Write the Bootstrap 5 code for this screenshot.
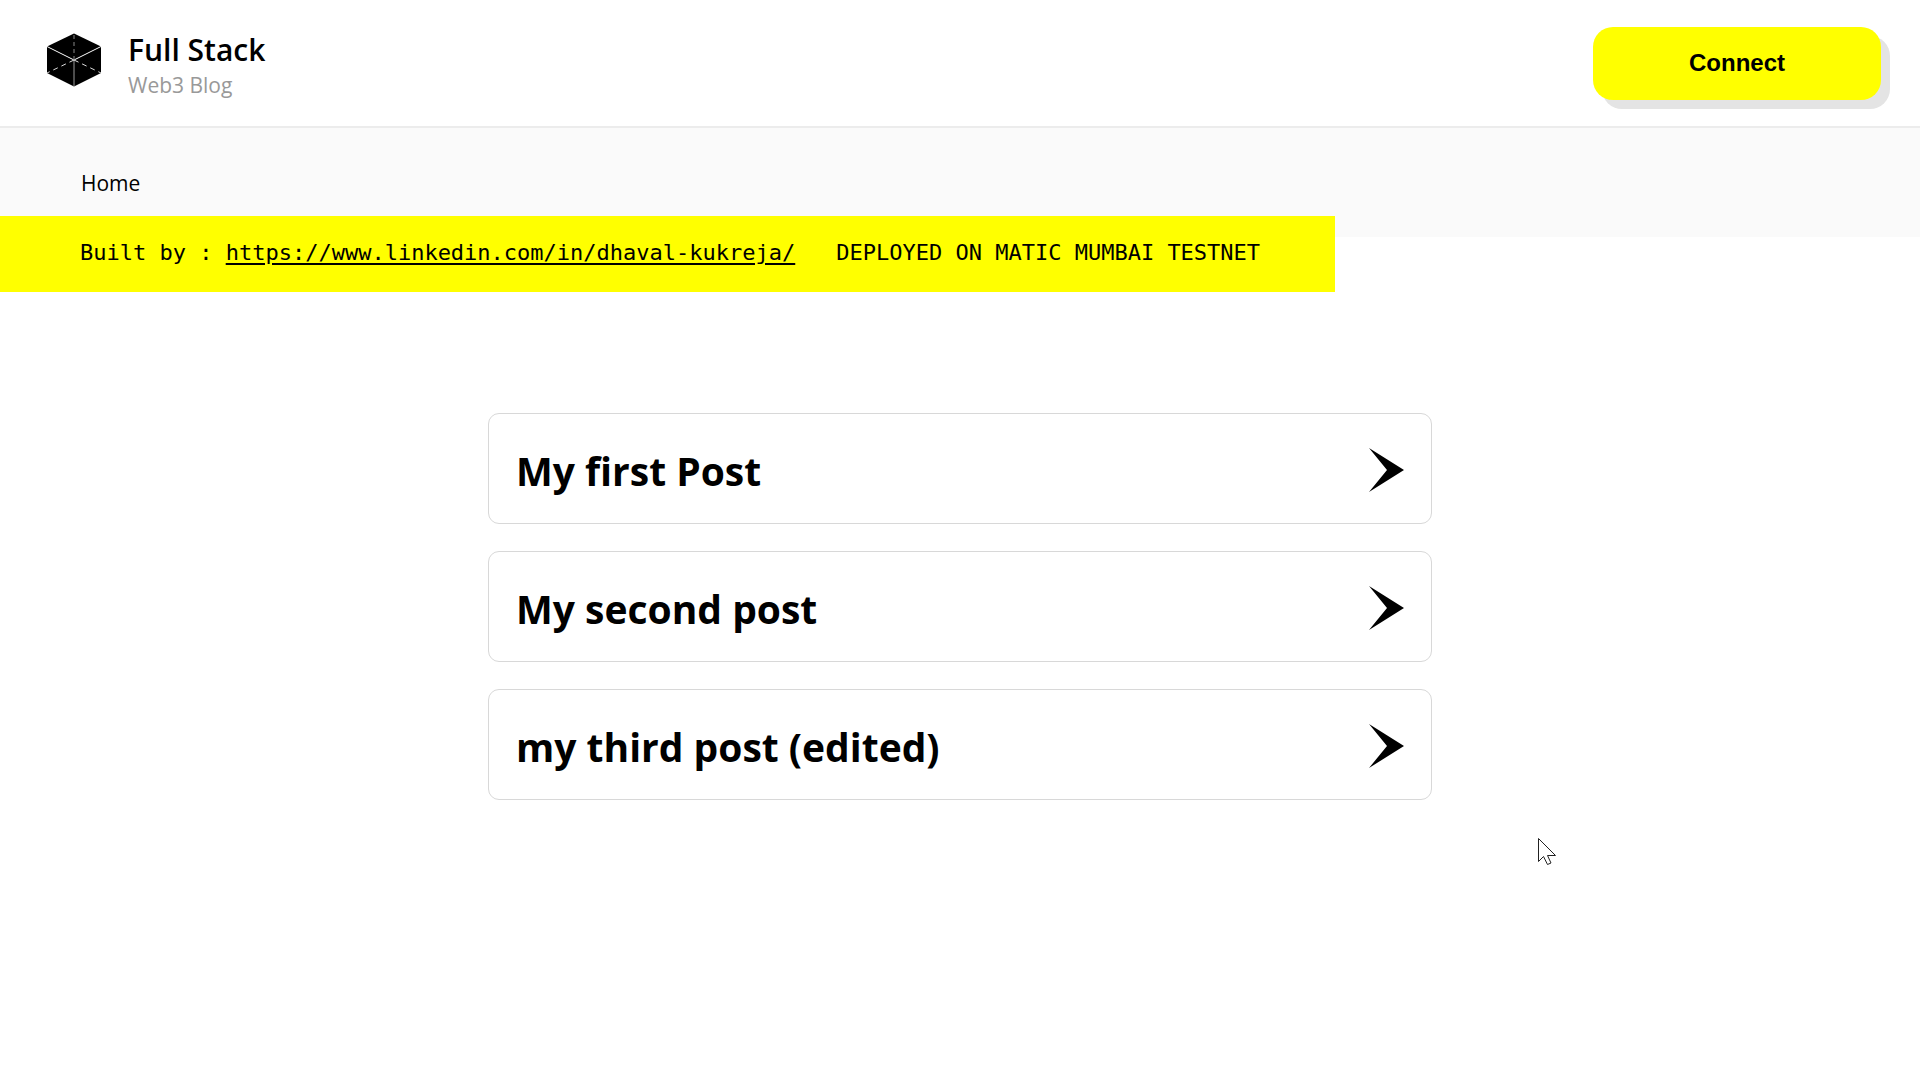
<!DOCTYPE html>
<html lang="en">
<head>
<meta charset="utf-8">
<meta name="viewport" content="width=device-width, initial-scale=1">
<title>Full Stack Web3 Blog</title>
<link href="https://cdn.jsdelivr.net/npm/bootstrap@5.3.0/dist/css/bootstrap.min.css" rel="stylesheet">
<style>
body { font-family: "Open Sans", "Noto Sans", sans-serif; color: #000; background: #fff; min-height: 100vh; }
.site-header { padding: 26px 39px 26px 46px; border-bottom: 2px solid #ececec; }
.site-brand { color: #000; gap: 27px; }
.brand-logo { margin-bottom: 6px; }
.brand-text { padding-top: 4px; }
.brand-title { font-size: 30px; line-height: 40px; font-weight: 600; }
.brand-sub { font-size: 21px; line-height: 30px; color: #999; }
.connect-btn, .connect-btn:hover { width: 288px; height: 73px; border: 0; border-radius: 20px; background: #ff0; color: #000; font: 700 24px/32px "Liberation Sans", sans-serif; box-shadow: 9px 9px 0 #e4e4e4; }
.site-nav { background: #fafafa; padding: 39px 81px 17px; }
.site-nav a { font-size: 21px; line-height: 32px; color: #000; }
.nav-tail { background: linear-gradient(#fafafa 21px, transparent 21px); }
.banner { background: #ff0; font-family: "DejaVu Sans Mono", monospace; font-size: 22px; line-height: 32px; padding: 21px 75px 23px 80px; gap: 41px; width: fit-content; }
.banner a { color: #000; text-underline-offset: 3px; }
.post-list { max-width: 944px; gap: 27px; margin-top: 121px; }
.post-item { min-height: 111px; padding: 27px 27px 25px; border: 1px solid #d8d8d8; border-radius: 11px; color: #000; }
.post-title { font-size: 39px; line-height: 54px; font-weight: 700; padding-top: 3px; }
.pointer { left: 1537px; top: 837px; }
</style>
<script src="https://cdn.jsdelivr.net/npm/bootstrap@5.3.0/dist/js/bootstrap.bundle.min.js"></script>
</head>
<body class="position-relative">
<header class="site-header d-flex justify-content-between align-items-center">
  <a href="#" class="site-brand d-flex align-items-center text-decoration-none">
    <svg class="brand-logo" width="55" height="54" viewBox="0 0 55 54" aria-hidden="true">
      <path d="M28 .5 55 13.500V40L28 53.500 1 40V13.500Z"/>
      <path d="M1 13.500 28 27 55 13.500" fill="none" stroke="#fff"/>
      <path d="M28 27V53" fill="none" stroke="#999"/>
      <path d="M28 27 1 40M28 27 55 40" fill="none" stroke="#ddd" stroke-dasharray="5 4"/>
      <path d="M28 27V1" fill="none" stroke="#888" stroke-dasharray="4 3"/>
    </svg>
    <span class="brand-text d-flex flex-column">
      <span class="brand-title">Full Stack</span>
      <span class="brand-sub">Web3 Blog</span>
    </span>
  </a>
  <button type="button" class="connect-btn btn">Connect</button>
</header>
<nav class="site-nav"><a href="#" class="d-block text-decoration-none">Home</a></nav>
<div class="nav-tail">
  <div class="banner d-flex flex-wrap">
    <span>Built by : <a href="https://www.linkedin.com/in/dhaval-kukreja/">https://www.linkedin.com/in/dhaval-kukreja/</a></span>
    <span>DEPLOYED ON MATIC MUMBAI TESTNET</span>
  </div>
</div>
<main class="post-list d-flex flex-column mx-auto">
  <a href="#" class="post-item d-flex justify-content-between align-items-center text-decoration-none">
    <span class="post-title">My first Post</span>
    <svg width="35" height="44" viewBox="0 0 35 44" aria-hidden="true"><path d="M0 0 35 22 0 44 18 22Z"/></svg>
  </a>
  <a href="#" class="post-item d-flex justify-content-between align-items-center text-decoration-none">
    <span class="post-title">My second post</span>
    <svg width="35" height="44" viewBox="0 0 35 44" aria-hidden="true"><path d="M0 0 35 22 0 44 18 22Z"/></svg>
  </a>
  <a href="#" class="post-item d-flex justify-content-between align-items-center text-decoration-none">
    <span class="post-title">my third post (edited)</span>
    <svg width="35" height="44" viewBox="0 0 35 44" aria-hidden="true"><path d="M0 0 35 22 0 44 18 22Z"/></svg>
  </a>
</main>
<svg class="pointer position-absolute" width="20" height="29" viewBox="0 0 20 29" aria-hidden="true"><path d="M1.500 1.500V24.500L6.500 19.500 10.500 27.500 14 26 10.500 18.500H18.500Z" fill="#fff" stroke="#222"/></svg>
</body>
</html>
